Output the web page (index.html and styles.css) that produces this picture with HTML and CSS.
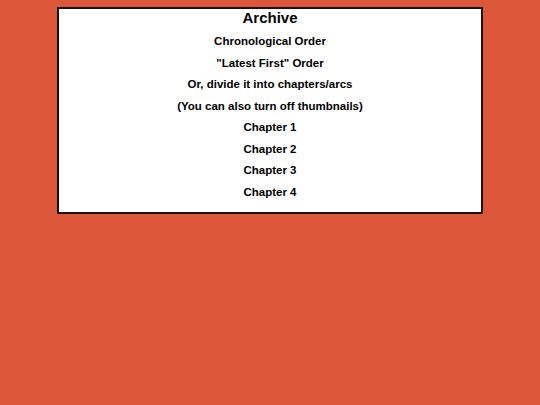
FILE: index.html
```html
<!DOCTYPE html>
<html lang="en">
<head>
<meta charset="utf-8">
<title>Archive</title>
<link rel="stylesheet" href="styles.css">
</head>
<body>
  <div class="archive">
    <h2 class="archive-title">Archive</h2>
    <ul class="archive-list">
      <li><a href="#">Chronological Order</a></li>
      <li><a href="#">"Latest First" Order</a></li>
      <li><a href="#">Or, divide it into chapters/arcs</a></li>
      <li><a href="#">(You can also turn off thumbnails)</a></li>
      <li><a href="#">Chapter 1</a></li>
      <li><a href="#">Chapter 2</a></li>
      <li><a href="#">Chapter 3</a></li>
      <li><a href="#">Chapter 4</a></li>
    </ul>
  </div>
</body>
</html>
```
FILE: styles.css
```css
html, body {
  margin: 0;
  padding: 0;
  background: #dc573a;
}

body {
  font-family: "Liberation Sans", Arial, sans-serif;
  color: #000;
}

.archive {
  box-sizing: border-box;
  width: 426px;
  margin: 7px auto 0;
  padding: 1px 0 9px;
  background: #fff;
  border: 2px solid #1a1212;
  text-align: center;
}

.archive-title {
  margin: 0;
  font-size: 15px;
  line-height: 16px;
  font-weight: bold;
}

.archive-list {
  list-style: none;
  margin: 5px 0 0;
  padding: 0;
}

.archive-list li {
  font-size: 11.5px;
  line-height: 21.5px;
  font-weight: bold;
}

.archive-list a {
  color: #000;
  text-decoration: none;
}
```
